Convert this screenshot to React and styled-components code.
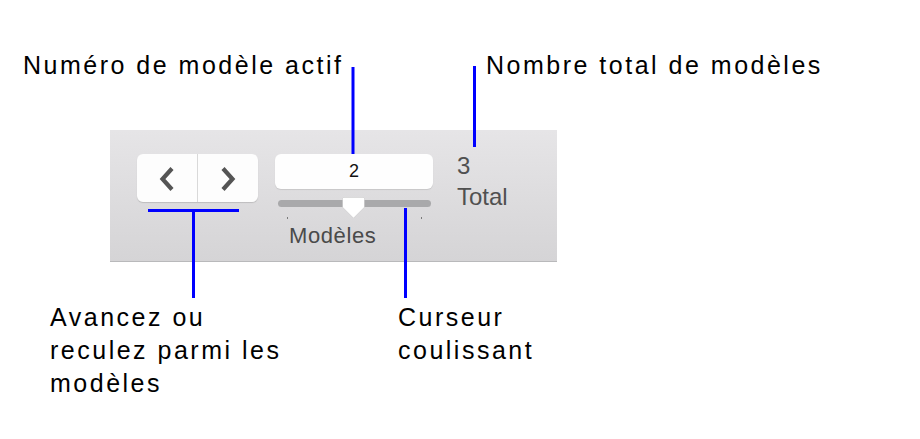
import React from 'react';
import styled, { createGlobalStyle } from 'styled-components';

const GlobalStyle = createGlobalStyle`
  html, body {
    margin: 0;
    padding: 0;
    background: #ffffff;
  }
`;

const Figure = styled.div`
  position: relative;
  width: 920px;
  height: 439px;
  background: #ffffff;
  font-family: "Liberation Sans", Arial, sans-serif;
  overflow: hidden;
`;

const LabelRow = styled.div`
  display: flex;
  align-items: flex-start;
  height: ${(p) => p.$height}px;
  padding-top: ${(p) => p.$top}px;
  padding-left: ${(p) => p.$left}px;
  box-sizing: border-box;
`;

const Label = styled.div`
  width: ${(p) => (p.$width ? `${p.$width}px` : 'auto')};
  font-size: 25px;
  line-height: 33px;
  letter-spacing: 2.5px;
  color: #000000;
`;

const Toolbar = styled.div`
  display: flex;
  align-items: flex-start;
  margin-left: 110px;
  width: 447px;
  height: 132px;
  box-sizing: border-box;
  padding: 24px 0 0 27px;
  background: linear-gradient(#e6e5e7, #d5d4d6);
  border-bottom: 1px solid #b9b9bb;
`;

const Segmented = styled.div`
  display: flex;
  width: 121px;
  height: 48px;
  background: #fdfdfd;
  border-radius: 6px;
  box-shadow: 0 1px 1px rgba(0, 0, 0, 0.14);
  overflow: hidden;
`;

const NavButton = styled.div`
  flex: 1;
  display: flex;
  align-items: center;
  justify-content: center;
  border-left: ${(p) => (p.$divided ? '1px solid #d9d9d9' : 'none')};
  color: #555555;
  padding-top: 2px;
`;

const SliderColumn = styled.div`
  display: flex;
  flex-direction: column;
  width: 158px;
  margin-left: 17px;
`;

const ValueField = styled.div`
  height: 35px;
  display: flex;
  align-items: center;
  justify-content: center;
  background: #fefefe;
  border-radius: 6px;
  box-shadow: 0 1px 1px rgba(0, 0, 0, 0.1);
  font-size: 18px;
  color: #111111;
`;

const Track = styled.div`
  position: relative;
  height: 7px;
  margin: 11px 2px 0 3px;
  border-radius: 4px;
  background: #a9a9ab;
`;

const Thumb = styled.svg`
  position: absolute;
  left: 64px;
  top: -3px;
  filter: drop-shadow(0 0.5px 0.6px rgba(0, 0, 0, 0.35));
`;

const Ticks = styled.div`
  display: flex;
  justify-content: space-between;
  height: 2px;
  margin-top: 10px;
  padding: 0 11px 0 12px;
`;

const Tick = styled.span`
  width: 1px;
  height: 2px;
  background: #7a7a7a;
`;

const Caption = styled.div`
  margin: 4px 0 0 14px;
  font-size: 22px;
  line-height: 26px;
  letter-spacing: 0.6px;
  color: #4a4a4a;
`;

const TotalColumn = styled.div`
  margin: -4px 0 0 24px;
  font-size: 24px;
  line-height: 31px;
  color: #505050;
`;

const Leaders = styled.svg`
  position: absolute;
  left: 0;
  top: 0;
  pointer-events: none;
`;

const Chevron = ({ dir }) => (
  <svg width="18" height="26" viewBox="0 0 18 26">
    <path
      d={dir === 'left' ? 'M14 2.5 L4.5 13 L14 23.5' : 'M4 2.5 L13.5 13 L4 23.5'}
      fill="none"
      stroke="currentColor"
      strokeWidth="4.2"
      strokeLinejoin="miter"
    />
  </svg>
);

export default function App() {
  return (
    <>
      <GlobalStyle />
      <Figure>
        <LabelRow $height={130} $top={49} $left={23}>
          <Label $width={463}>Numéro de modèle actif</Label>
          <Label>Nombre total de modèles</Label>
        </LabelRow>

        <Toolbar>
          <Segmented>
            <NavButton>
              <Chevron dir="left" />
            </NavButton>
            <NavButton $divided>
              <Chevron dir="right" />
            </NavButton>
          </Segmented>

          <SliderColumn>
            <ValueField>2</ValueField>
            <Track>
              <Thumb width="23" height="22" viewBox="0 0 23 22">
                <path d="M2 0.5 H21 Q22.5 0.5 22.5 2 V10 L11.5 21 L0.5 10 V2 Q0.5 0.5 2 0.5 Z" fill="#ffffff" />
              </Thumb>
            </Track>
            <Ticks>
              <Tick />
              <Tick />
            </Ticks>
            <Caption>Modèles</Caption>
          </SliderColumn>

          <TotalColumn>
            <div>3</div>
            <div>Total</div>
          </TotalColumn>
        </Toolbar>

        <LabelRow $height={177} $top={39} $left={50}>
          <Label $width={348}>
            Avancez ou
            <br />
            reculez parmi les
            <br />
            modèles
          </Label>
          <Label>
            Curseur
            <br />
            coulissant
          </Label>
        </LabelRow>

        <Leaders width="920" height="439">
          <g stroke="#0000ff" strokeWidth="3" fill="none">
            <line x1="353" y1="67" x2="353" y2="154" />
            <line x1="474.5" y1="66" x2="474.5" y2="147" />
            <line x1="148" y1="210.5" x2="239" y2="210.5" />
            <line x1="193.5" y1="210" x2="193.5" y2="298" />
            <line x1="405.5" y1="208" x2="405.5" y2="298" />
          </g>
        </Leaders>
      </Figure>
    </>
  );
}
